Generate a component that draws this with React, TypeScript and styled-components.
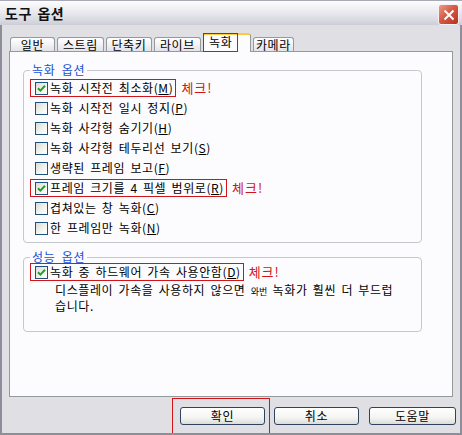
import styled, { createGlobalStyle } from "styled-components";

const GlobalStyle = createGlobalStyle`
  html, body {
    margin: 0;
    padding: 0;
    background: #e0dfe3;
  }
  body {
    font-family: "Noto Sans CJK KR", "Noto Sans", sans-serif;
    font-size: 12px;
    color: #000;
  }
`;

const tabs = [
  { label: "일반", width: 45 },
  { label: "스트림", width: 47 },
  { label: "단축키", width: 46 },
  { label: "라이브", width: 47 },
  { label: "녹화", width: 48, active: true },
  { label: "카메라", width: 41 },
];

const recordOptions = [
  { text: "녹화 시작전 최소화", key: "M", checked: true, marked: true },
  { text: "녹화 시작전 일시 정지", key: "P" },
  { text: "녹화 사각형 숨기기", key: "H" },
  { text: "녹화 사각형 테두리선 보기", key: "S" },
  { text: "생략된 프레임 보고", key: "F" },
  { text: "프레임 크기를 4 픽셀 범위로", key: "R", checked: true, marked: true },
  { text: "겹쳐있는 창 녹화", key: "C" },
  { text: "한 프레임만 녹화", key: "N" },
];

function CheckBox({ checked }: { checked?: boolean }) {
  return (
    <Box>
      {checked && (
        <svg width="9" height="9" viewBox="0 0 9 9">
          <path d="M1 4.2 L3.4 6.6 L8 1.8" stroke="#21a121" strokeWidth="2" fill="none" />
        </svg>
      )}
    </Box>
  );
}

function Option(props: { text: string; hotkey: string; checked?: boolean; marked?: boolean; $h?: number }) {
  return (
    <Row $h={props.$h || 20}>
      <LabelBox $marked={props.marked}>
        <CheckBox checked={props.checked} />
        <span>
          {props.text}(<u>{props.hotkey}</u>)
        </span>
      </LabelBox>
      {props.marked && <Note>체크!</Note>}
    </Row>
  );
}

export default function App() {
  return (
    <>
      <GlobalStyle />
      <Window>
        <TitleBar>
          <Title>도구 옵션</Title>
          <CloseButton>
            <svg width="12" height="12" viewBox="0 0 12 12">
              <path d="M1.5 1.5 L10.5 10.5 M10.5 1.5 L1.5 10.5" stroke="#fff" strokeWidth="2" />
            </svg>
          </CloseButton>
        </TitleBar>
        <Frame>
          <TabRow>
            {tabs.map((t) =>
              t.active ? (
                <ActiveTab key={t.label} style={{ width: t.width }}>
                  <TabMark>{t.label}</TabMark>
                </ActiveTab>
              ) : (
                <Tab key={t.label} style={{ width: t.width }}>
                  {t.label}
                </Tab>
              )
            )}
          </TabRow>
          <Panel>
            <Group $pt={2} $pb={4}>
              <Legend>녹화 옵션</Legend>
              {recordOptions.map((o) => (
                <Option
                  key={o.key}
                  text={o.text}
                  hotkey={o.key}
                  checked={o.checked}
                  marked={o.marked}
                />
              ))}
            </Group>
            <Group $pt={0} $pb={18} $mt={8}>
              <Legend>성능 옵션</Legend>
              <Option text="녹화 중 하드웨어 가속 사용안함" hotkey="D" checked marked $h={18} />
              <Description>
                디스플레이 가속을 사용하지 않으면 <Small>와번</Small> 녹화가 훨씬 더 부드럽
                <br />
                습니다.
              </Description>
            </Group>
          </Panel>
          <Footer>
            <ButtonMark>
              <Button $w={85}>확인</Button>
            </ButtonMark>
            <Button $w={85} $ml={4}>취소</Button>
            <Button $w={87} $ml={10}>도움말</Button>
          </Footer>
        </Frame>
      </Window>
    </>
  );
}

//styles
const Window = styled.div`
  width: 462px;
  height: 435px;
  display: flex;
  flex-direction: column;
  overflow: hidden;
  background: #e0dfe3;
`;

const TitleBar = styled.div`
  height: 25px;
  flex-shrink: 0;
  display: flex;
  align-items: center;
  justify-content: space-between;
  padding: 0 3px 0 5px;
  box-sizing: border-box;
  border-top: 1px solid #a9a9b6;
  background: linear-gradient(to bottom, #fdfdfe 0%, #eeeef3 35%, #dcdce4 75%, #cdcdd7 100%);
`;

const Title = styled.span`
  font-size: 14px;
  font-weight: 700;
  line-height: 16px;
  letter-spacing: 0.5px;
  word-spacing: 2px;
  color: #111;
`;

const CloseButton = styled.div`
  width: 19px;
  height: 19px;
  margin-top: 3px;
  border: 1px solid #f4f4f8;
  border-radius: 3px;
  display: flex;
  align-items: center;
  justify-content: center;
  background: linear-gradient(135deg, #ee9a86 0%, #d85a44 45%, #b8321f 100%);
`;

const Frame = styled.div`
  flex: 1;
  display: flex;
  flex-direction: column;
  border: 2px solid #8e8e9b;
  border-top: none;
  padding-top: 8px;
  min-height: 0;
`;

const TabRow = styled.div`
  height: 18px;
  display: flex;
  align-items: flex-end;
  gap: 2px;
  margin-left: 8px;
  position: relative;
  z-index: 1;
`;

const Tab = styled.div`
  height: 14px;
  box-sizing: border-box;
  border: 1px solid #919b9c;
  border-bottom: none;
  border-radius: 3px 3px 0 0;
  background: linear-gradient(to bottom, #ffffff 0%, #f3f3f5 50%, #e2e2e8 100%);
  font-size: 12px;
  line-height: 13px;
  letter-spacing: 0.7px;
  text-align: center;
`;

const ActiveTab = styled.div`
  height: 19px;
  margin-bottom: -1px;
  box-sizing: border-box;
  border: 1px solid #919b9c;
  border-top: 2px solid #ffc83c;
  border-bottom: none;
  border-radius: 3px 3px 0 0;
  background: #fcfcfe;
  display: flex;
`;

const TabMark = styled.span`
  height: 17px;
  margin: -2px 0 0 -1px;
  padding: 0 5px;
  border: 1px solid #d0141a;
  font-size: 12px;
  line-height: 16px;
  letter-spacing: 0.7px;
`;

const Panel = styled.div`
  height: 346px;
  box-sizing: border-box;
  margin: 0 7px;
  border: 1px solid #919b9c;
  background: #fcfcfe;
  padding: 12px 30px 0 13px;
`;

const Group = styled.fieldset<{ $pt: number; $pb: number; $mt?: number }>`
  margin: ${(p) => p.$mt || 0}px 0 0 0;
  padding: ${(p) => p.$pt}px 6px ${(p) => p.$pb}px 6px;
  border: 1px solid #c6c6cd;
  border-radius: 4px;
  min-width: 0;
`;

const Legend = styled.legend`
  padding: 0 2px;
  margin-left: 0;
  font-size: 12px;
  line-height: 12px;
  letter-spacing: 0.7px;
  word-spacing: 3px;
  color: #1650d0;
`;

const Row = styled.div<{ $h: number }>`
  height: ${(p) => p.$h}px;
  display: flex;
  align-items: center;
`;

const LabelBox = styled.span<{ $marked?: boolean }>`
  height: 18px;
  box-sizing: border-box;
  display: inline-flex;
  align-items: center;
  gap: 2px;
  padding: 0 2px 0 4px;
  border: 1px solid ${(p) => (p.$marked ? "#d0141a" : "transparent")};
  font-size: 12px;
  line-height: 16px;
  letter-spacing: 0.6px;
  word-spacing: 2px;
  white-space: nowrap;
`;

const Box = styled.span`
  width: 13px;
  height: 13px;
  box-sizing: border-box;
  border: 1px solid #1c5180;
  background: linear-gradient(135deg, #dcdcd7 0%, #f4f4f0 60%, #ffffff 100%);
  display: inline-flex;
  align-items: center;
  justify-content: center;
`;

const Note = styled.span`
  margin-left: 5px;
  color: #d0141a;
  font-size: 13px;
  line-height: 16px;
  letter-spacing: 1px;
`;

const Description = styled.div`
  margin: 2px 0 0 25px;
  font-size: 12px;
  line-height: 14px;
  letter-spacing: 0.6px;
  word-spacing: 2px;
  white-space: nowrap;
`;

const Small = styled.span`
  font-size: 9px;
  letter-spacing: 0;
`;

const Footer = styled.div`
  flex: 1;
  display: flex;
  justify-content: flex-end;
  align-items: flex-start;
  padding: 1px 4px 0 0;
`;

const ButtonMark = styled.div`
  align-self: stretch;
  border: 1px solid #d0141a;
  border-bottom: none;
  padding: 8px 4px 0 7px;
`;

const Button = styled.div<{ $w: number; $ml?: number }>`
  width: ${(p) => p.$w}px;
  height: 18px;
  margin: ${(p) => (p.$ml !== undefined ? "9px 0 0 " + p.$ml + "px" : "0")};
  box-sizing: border-box;
  border: 1px solid #2f4360;
  border-radius: 3px;
  background: linear-gradient(to bottom, #ffffff 0%, #f4f4f2 60%, #dcdcd8 100%);
  font-size: 12px;
  line-height: 16px;
  letter-spacing: 0.7px;
  text-align: center;
`;
